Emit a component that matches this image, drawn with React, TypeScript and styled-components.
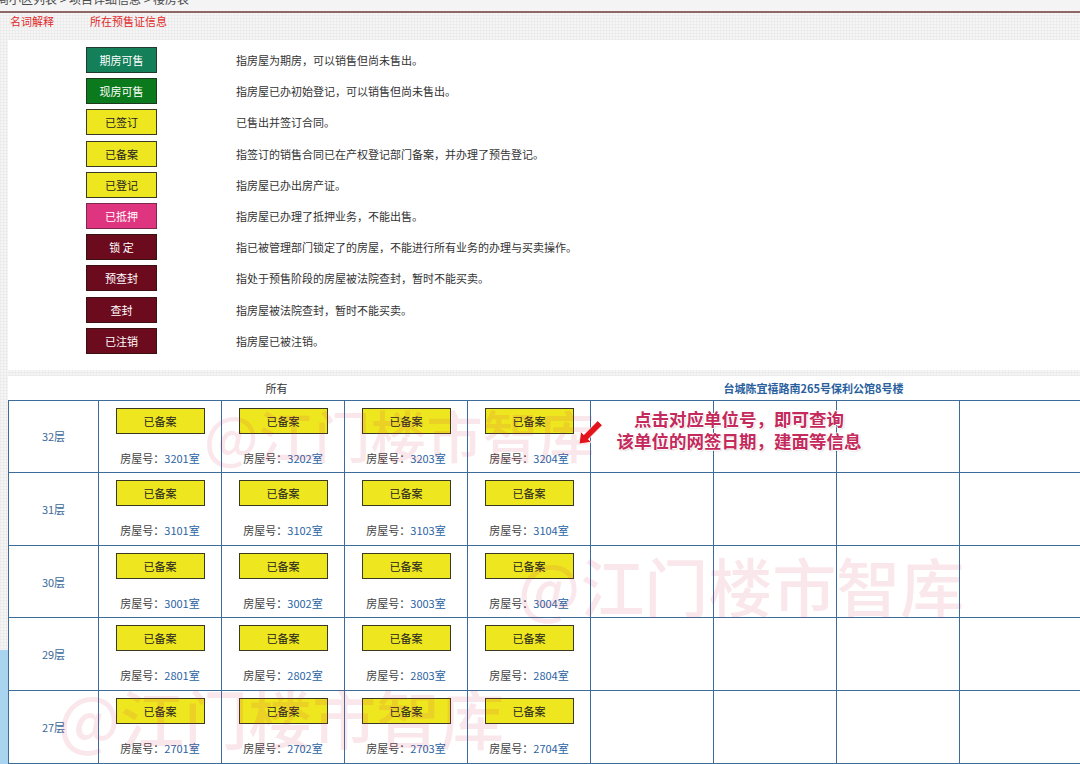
import React from 'react';
import styled, {createGlobalStyle} from 'styled-components';

const GlobalStyle = createGlobalStyle`
    html, body {
        margin: 0;
        padding: 0;
        background: #f6f6f6;
    }
    * {
        box-sizing: border-box;
    }
`;

type Tone = 'teal' | 'green' | 'yellow' | 'pink' | 'maroon';

const tones: Record<Tone, {bg: string; fg: string; border: string}> = {
    teal: {bg: '#13805a', fg: '#ffffff', border: '#24392e'},
    green: {bg: '#0b7a1c', fg: '#ffffff', border: '#1e3a1e'},
    yellow: {bg: '#eee61e', fg: '#222222', border: '#3a3a22'},
    pink: {bg: '#df3580', fg: '#ffffff', border: '#7a2a4a'},
    maroon: {bg: '#6c0a1e', fg: '#ffffff', border: '#3a1010'},
};

const legend: {label: string; tone: Tone; text: string}[] = [
    {label: '期房可售', tone: 'teal', text: '指房屋为期房，可以销售但尚未售出。'},
    {label: '现房可售', tone: 'green', text: '指房屋已办初始登记，可以销售但尚未售出。'},
    {label: '已签订', tone: 'yellow', text: '已售出并签订合同。'},
    {label: '已备案', tone: 'yellow', text: '指签订的销售合同已在产权登记部门备案，并办理了预告登记。'},
    {label: '已登记', tone: 'yellow', text: '指房屋已办出房产证。'},
    {label: '已抵押', tone: 'pink', text: '指房屋已办理了抵押业务，不能出售。'},
    {label: '锁 定', tone: 'maroon', text: '指已被管理部门锁定了的房屋，不能进行所有业务的办理与买卖操作。'},
    {label: '预查封', tone: 'maroon', text: '指处于预售阶段的房屋被法院查封，暂时不能买卖。'},
    {label: '查封', tone: 'maroon', text: '指房屋被法院查封，暂时不能买卖。'},
    {label: '已注销', tone: 'maroon', text: '指房屋已被注销。'},
];

const floors = [
    {label: '32层', prefix: '32'},
    {label: '31层', prefix: '31'},
    {label: '30层', prefix: '30'},
    {label: '29层', prefix: '28'},
    {label: '27层', prefix: '27'},
];

const watermarks = [
    {left: 196, top: 6, size: 56},
    {left: 510, top: 152, size: 64},
    {left: 50, top: 284, size: 64},
];

const App: React.FunctionComponent = () => {
    return (
        <Page>
            <GlobalStyle/>
            <Breadcrumb><span>商小区列表 &gt; 项目详细信息 &gt; 楼房表</span></Breadcrumb>
            <Tabs>
                <Tab>名词解释</Tab>
                <Tab>所在预售证信息</Tab>
            </Tabs>
            <Body>
                <Rail>
                    <RailTop/>
                    <RailBlue/>
                </Rail>
                <Main>
                    <Legend>
                        {legend.map(item => (
                            <LegendRow key={item.label}>
                                <Badge $tone={item.tone}>{item.label}</Badge>
                                <LegendText>{item.text}</LegendText>
                            </LegendRow>
                        ))}
                    </Legend>
                    <HeaderRow>
                        <HeaderCell>所有</HeaderCell>
                        <HeaderCell $link>台城陈宜禧路南265号保利公馆8号楼</HeaderCell>
                    </HeaderRow>
                    <TableWrap>
                        <Grid>
                            {floors.map(floor => (
                                <React.Fragment key={floor.label}>
                                    <FloorCell>{floor.label}</FloorCell>
                                    {[1, 2, 3, 4].map(n => (
                                        <UnitCell key={n}>
                                            <UnitBadge>已备案</UnitBadge>
                                            <RoomText>房屋号：<RoomLink>{floor.prefix}0{n}室</RoomLink></RoomText>
                                        </UnitCell>
                                    ))}
                                    {[5, 6, 7, 8].map(n => <EmptyCell key={n}/>)}
                                </React.Fragment>
                            ))}
                        </Grid>
                        {watermarks.map((wm, i) => (
                            <Watermark key={i} style={{left: wm.left, top: wm.top, fontSize: wm.size}}>@江门楼市智库</Watermark>
                        ))}
                        <Arrow viewBox="0 0 30 32" width="30" height="32">
                            <polygon
                                points="23.7,3.7 28.3,8.3 14.3,22.2 17.4,25.2 5,27 6.8,14.6 9.8,17.7"
                                fill="#e3141c"
                                stroke="#ffffff"
                                strokeWidth="0.8"
                                strokeLinejoin="round"
                            />
                        </Arrow>
                        <Note>
                            点击对应单位号，即可查询<br/>
                            该单位的网签日期，建面等信息
                        </Note>
                    </TableWrap>
                </Main>
            </Body>
        </Page>
    );
}

const Page = styled.div`
    width: 1080px;
    height: 764px;
    overflow: hidden;
    font-family: "Noto Sans CJK SC", "Noto Sans", sans-serif;
    background-color: #f6f6f6;
    background-image: linear-gradient(#ececec 1px, transparent 1px), linear-gradient(90deg, #ececec 1px, transparent 1px);
    background-size: 3px 3px;
`;

const Breadcrumb = styled.div`
    height: 13px;
    overflow: hidden;
    border-bottom: 2px solid #8e6767;
    background: #f4f4f4;
    span {
        display: block;
        margin: -9px 0 0 -3px;
        font-size: 12px;
        line-height: 16px;
        color: #4a4a4a;
        white-space: nowrap;
    }
`;

const Tabs = styled.div`
    height: 27px;
    display: flex;
    padding-left: 10px;
`;

const Tab = styled.div`
    width: 80px;
    font-size: 11px;
    line-height: 16px;
    color: #e0282b;
    white-space: nowrap;
`;

const Body = styled.div`
    display: flex;
    height: 724px;
`;

const Rail = styled.div`
    width: 8px;
    flex-shrink: 0;
    display: flex;
    flex-direction: column;
`;

const RailTop = styled.div`
    flex: 0 0 610px;
`;

const RailBlue = styled.div`
    flex: 1;
    background: #a8d4f0;
`;

const Main = styled.div`
    width: 1074px;
    flex-shrink: 0;
    display: flex;
    flex-direction: column;
`;

const Legend = styled.div`
    background: #ffffff;
    padding: 7px 0 16px 78px;
    display: flex;
    flex-direction: column;
    gap: 5.2px;
`;

const LegendRow = styled.div`
    display: grid;
    grid-template-columns: 71px 1fr;
    column-gap: 79px;
    align-items: center;
`;

const Badge = styled.div<{$tone: Tone}>`
    height: 26px;
    display: flex;
    align-items: center;
    justify-content: center;
    font-size: 11px;
    background: ${props => tones[props.$tone].bg};
    color: ${props => tones[props.$tone].fg};
    border: 1px solid ${props => tones[props.$tone].border};
`;

const LegendText = styled.div`
    font-size: 11px;
    color: #333333;
    white-space: nowrap;
`;

const HeaderRow = styled.div`
    margin-top: 6px;
    height: 24px;
    display: grid;
    grid-template-columns: 1fr 1fr;
    background: #ffffff;
`;

const HeaderCell = styled.div<{$link?: boolean}>`
    display: flex;
    align-items: center;
    justify-content: center;
    font-size: 11px;
    color: ${props => props.$link ? '#2a5f9e' : '#333333'};
    font-weight: ${props => props.$link ? 700 : 400};
`;

const TableWrap = styled.div`
    position: relative;
    background: #ffffff;
`;

const Grid = styled.div`
    display: grid;
    grid-template-columns: 90px repeat(8, 123px);
    grid-auto-rows: 72.6px;
    border-left: 1px solid #3c6c9a;
    border-top: 1px solid #3c6c9a;
    width: 1075px;
`;

const FloorCell = styled.div`
    border-right: 1px solid #3c6c9a;
    border-bottom: 1px solid #3c6c9a;
    display: flex;
    align-items: center;
    justify-content: center;
    font-size: 11px;
    color: #3a6a98;
`;

const UnitCell = styled.div`
    border-right: 1px solid #3c6c9a;
    border-bottom: 1px solid #3c6c9a;
    display: flex;
    flex-direction: column;
    align-items: center;
    padding-top: 7px;
    gap: 17px;
`;

const EmptyCell = styled.div`
    border-right: 1px solid #3c6c9a;
    border-bottom: 1px solid #3c6c9a;
`;

const UnitBadge = styled.div`
    width: 89px;
    height: 26px;
    display: flex;
    align-items: center;
    justify-content: center;
    background: #eee61e;
    border: 1px solid #3a3a22;
    font-size: 11px;
    color: #222222;
`;

const RoomText = styled.div`
    font-size: 11px;
    line-height: 14px;
    color: #444444;
    white-space: nowrap;
`;

const RoomLink = styled.span`
    color: #2a64a4;
`;

const Watermark = styled.div`
    position: absolute;
    line-height: 1;
    font-weight: 500;
    color: rgba(214, 60, 92, 0.12);
    white-space: nowrap;
    pointer-events: none;
`;

const Arrow = styled.svg`
    position: absolute;
    left: 566px;
    top: 17px;
`;

const Note = styled.div`
    position: absolute;
    left: 606px;
    top: 8px;
    width: 250px;
    text-align: center;
    font-size: 17.5px;
    line-height: 22px;
    font-weight: 700;
    color: #c42a5c;
    white-space: nowrap;
    text-shadow: 1px 0 0 #fff, -1px 0 0 #fff, 0 1px 0 #fff, 0 -1px 0 #fff, 1px 1px 2px rgba(0, 0, 0, 0.25);
`;

export default App;
